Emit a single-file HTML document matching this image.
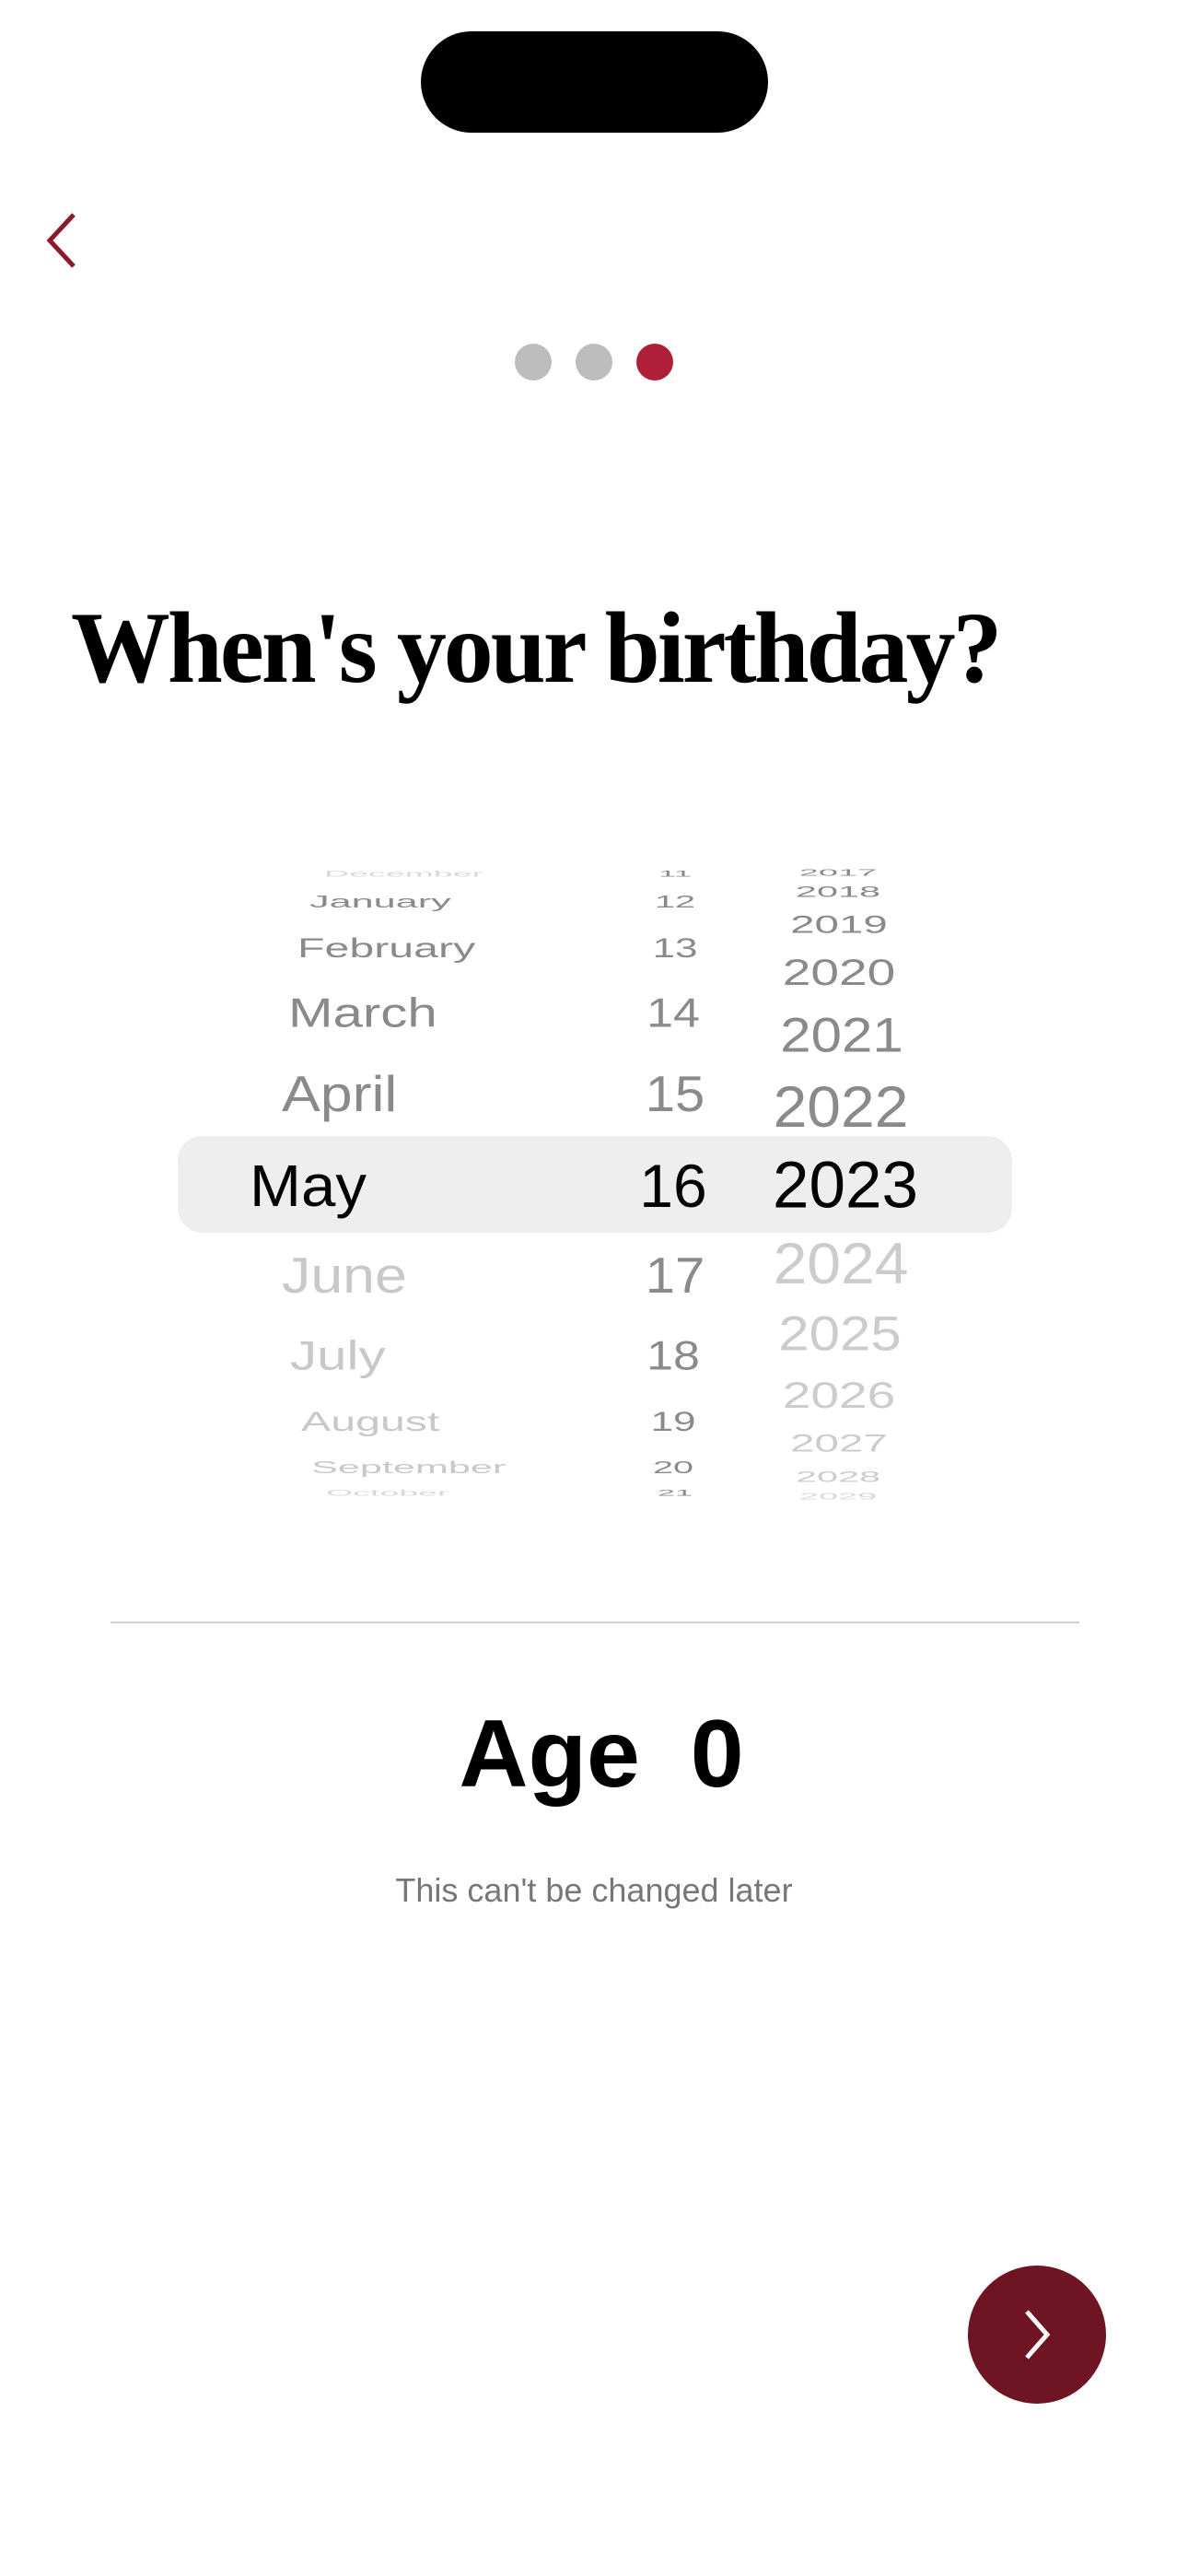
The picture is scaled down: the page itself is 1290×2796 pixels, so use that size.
<!DOCTYPE html>
<html><head><meta charset="utf-8">
<style>
html,body{margin:0;padding:0;background:#fff;}
body{width:1290px;height:2796px;position:relative;overflow:hidden;font-family:"Liberation Sans",sans-serif;}
.a{position:absolute;}
.r{position:absolute;white-space:nowrap;line-height:1;transform-origin:left center;}
.d{position:absolute;white-space:nowrap;line-height:1;transform-origin:center center;text-align:center;width:200px;}
</style></head><body>
<div class="a" style="left:457px;top:34px;width:377px;height:110px;border-radius:55px;background:#000;"></div>
<svg class="a" style="left:40px;top:225px" width="50" height="72" viewBox="0 0 50 72"><path d="M40 8 L14 36 L40 64" fill="none" stroke="#8b1a2b" stroke-width="5"/></svg>
<div class="a" style="left:559px;top:373px;width:40px;height:40px;border-radius:50%;background:#bdbdbd"></div>
<div class="a" style="left:625px;top:373px;width:40px;height:40px;border-radius:50%;background:#bdbdbd"></div>
<div class="a" style="left:691px;top:373px;width:40px;height:40px;border-radius:50%;background:#b01f38"></div>
<div class="a" style="left:77px;top:648px;font-family:'Liberation Serif',serif;font-weight:bold;font-size:110px;line-height:1;letter-spacing:-3px;transform:scaleX(0.98);transform-origin:left top;white-space:nowrap;color:#000">When's your birthday?</div>

<div class="a" style="left:193px;top:1233px;width:906px;height:105px;border-radius:27px;background:#eeeeee"></div>

<!-- months -->
<div class="r" style="left:352px;top:949px;font-size:30px;color:#d8d8d8;transform:translateY(-50%) scaleY(0.3) scaleX(1.25)">December</div>
<div class="r" style="left:336px;top:979px;font-size:36px;color:#8a8a8a;transform:translateY(-50%) scaleY(0.5) scaleX(1.2)">January</div>
<div class="r" style="left:323px;top:1029px;font-size:42px;color:#8a8a8a;transform:translateY(-50%) scaleY(0.7) scaleX(1.15)">February</div>
<div class="r" style="left:313px;top:1100px;font-size:52px;color:#8a8a8a;transform:translateY(-50%) scaleY(0.85) scaleX(1.12)">March</div>
<div class="r" style="left:306px;top:1188px;font-size:58px;color:#8a8a8a;transform:translateY(-50%) scaleY(0.95) scaleX(1.08)">April</div>
<div class="r" style="left:271px;top:1287px;font-size:64px;color:#000;transform:translateY(-50%) scaleX(1.05)">May</div>
<div class="r" style="left:306px;top:1385px;font-size:58px;color:#c8c8c8;transform:translateY(-50%) scaleY(0.95) scaleX(1.08)">June</div>
<div class="r" style="left:315px;top:1472px;font-size:52px;color:#c8c8c8;transform:translateY(-50%) scaleY(0.85) scaleX(1.12)">July</div>
<div class="r" style="left:327px;top:1543px;font-size:42px;color:#c8c8c8;transform:translateY(-50%) scaleY(0.7) scaleX(1.15)">August</div>
<div class="r" style="left:338px;top:1593px;font-size:36px;color:#c8c8c8;transform:translateY(-50%) scaleY(0.5) scaleX(1.2)">September</div>
<div class="r" style="left:354px;top:1621px;font-size:30px;color:#d8d8d8;transform:translateY(-50%) scaleY(0.3) scaleX(1.25)">October</div>

<!-- days -->
<div class="d" style="left:633px;top:949px;font-size:30px;color:#8a8a8a;transform:translateY(-50%) scaleY(0.3) scaleX(1.15)">11</div>
<div class="d" style="left:633px;top:979px;font-size:36px;color:#8a8a8a;transform:translateY(-50%) scaleY(0.5) scaleX(1.1)">12</div>
<div class="d" style="left:633px;top:1029px;font-size:42px;color:#8a8a8a;transform:translateY(-50%) scaleY(0.7) scaleX(1.05)">13</div>
<div class="d" style="left:631px;top:1100px;font-size:52px;color:#8a8a8a;transform:translateY(-50%) scaleY(0.85)">14</div>
<div class="d" style="left:633px;top:1188px;font-size:58px;color:#8a8a8a;transform:translateY(-50%) scaleY(0.95)">15</div>
<div class="d" style="left:631px;top:1287px;font-size:66px;color:#000;transform:translateY(-50%)">16</div>
<div class="d" style="left:633px;top:1385px;font-size:58px;color:#8a8a8a;transform:translateY(-50%) scaleY(0.95)">17</div>
<div class="d" style="left:631px;top:1472px;font-size:52px;color:#8a8a8a;transform:translateY(-50%) scaleY(0.85)">18</div>
<div class="d" style="left:631px;top:1543px;font-size:42px;color:#8a8a8a;transform:translateY(-50%) scaleY(0.7) scaleX(1.05)">19</div>
<div class="d" style="left:631px;top:1593px;font-size:36px;color:#8a8a8a;transform:translateY(-50%) scaleY(0.5) scaleX(1.1)">20</div>
<div class="d" style="left:633px;top:1621px;font-size:30px;color:#8a8a8a;transform:translateY(-50%) scaleY(0.3) scaleX(1.15)">21</div>

<!-- years -->
<div class="d" style="left:810px;top:947px;font-size:33px;color:#8a8a8a;transform:translateY(-50%) scaleY(0.3) scaleX(1.15)">2017</div>
<div class="d" style="left:810px;top:968px;font-size:37px;color:#8a8a8a;transform:translateY(-50%) scaleY(0.45) scaleX(1.12)">2018</div>
<div class="d" style="left:811px;top:1004px;font-size:44px;color:#8a8a8a;transform:translateY(-50%) scaleY(0.6) scaleX(1.08)">2019</div>
<div class="d" style="left:811px;top:1056px;font-size:53px;color:#8a8a8a;transform:translateY(-50%) scaleY(0.75) scaleX(1.04)">2020</div>
<div class="d" style="left:814px;top:1124px;font-size:60px;color:#8a8a8a;transform:translateY(-50%) scaleY(0.88)">2021</div>
<div class="d" style="left:813px;top:1201px;font-size:66px;color:#8a8a8a;transform:translateY(-50%) scaleY(0.95)">2022</div>
<div class="d" style="left:818px;top:1287px;font-size:71px;color:#000;transform:translateY(-50%)">2023</div>
<div class="d" style="left:813px;top:1371px;font-size:66px;color:#cccccc;transform:translateY(-50%) scaleY(0.95)">2024</div>
<div class="d" style="left:812px;top:1448px;font-size:60px;color:#cccccc;transform:translateY(-50%) scaleY(0.88)">2025</div>
<div class="d" style="left:811px;top:1515px;font-size:53px;color:#cccccc;transform:translateY(-50%) scaleY(0.75) scaleX(1.04)">2026</div>
<div class="d" style="left:811px;top:1567px;font-size:44px;color:#cccccc;transform:translateY(-50%) scaleY(0.6) scaleX(1.08)">2027</div>
<div class="d" style="left:810px;top:1603px;font-size:37px;color:#cccccc;transform:translateY(-50%) scaleY(0.45) scaleX(1.12)">2028</div>
<div class="d" style="left:810px;top:1624px;font-size:33px;color:#d8d8d8;transform:translateY(-50%) scaleY(0.3) scaleX(1.15)">2029</div>

<div class="a" style="left:120px;top:1760px;width:1052px;height:2px;background:#d0d0d0"></div>

<div class="a" style="left:0;top:1852px;width:1306px;text-align:center;font-weight:bold;font-size:104px;line-height:1;color:#000;white-space:nowrap;word-spacing:26px">Age 0</div>
<div class="a" style="left:0;top:2034px;width:1290px;text-align:center;font-size:36px;line-height:1;color:#777">This can't be changed later</div>

<div class="a" style="left:1051px;top:2459px;width:150px;height:150px;border-radius:50%;background:#6e1423"></div>
<svg class="a" style="left:1101px;top:2499px" width="50" height="72" viewBox="0 0 50 72"><path d="M14 10 L36 35 L14 60" fill="none" stroke="#fff" stroke-width="5"/></svg>
</body></html>
